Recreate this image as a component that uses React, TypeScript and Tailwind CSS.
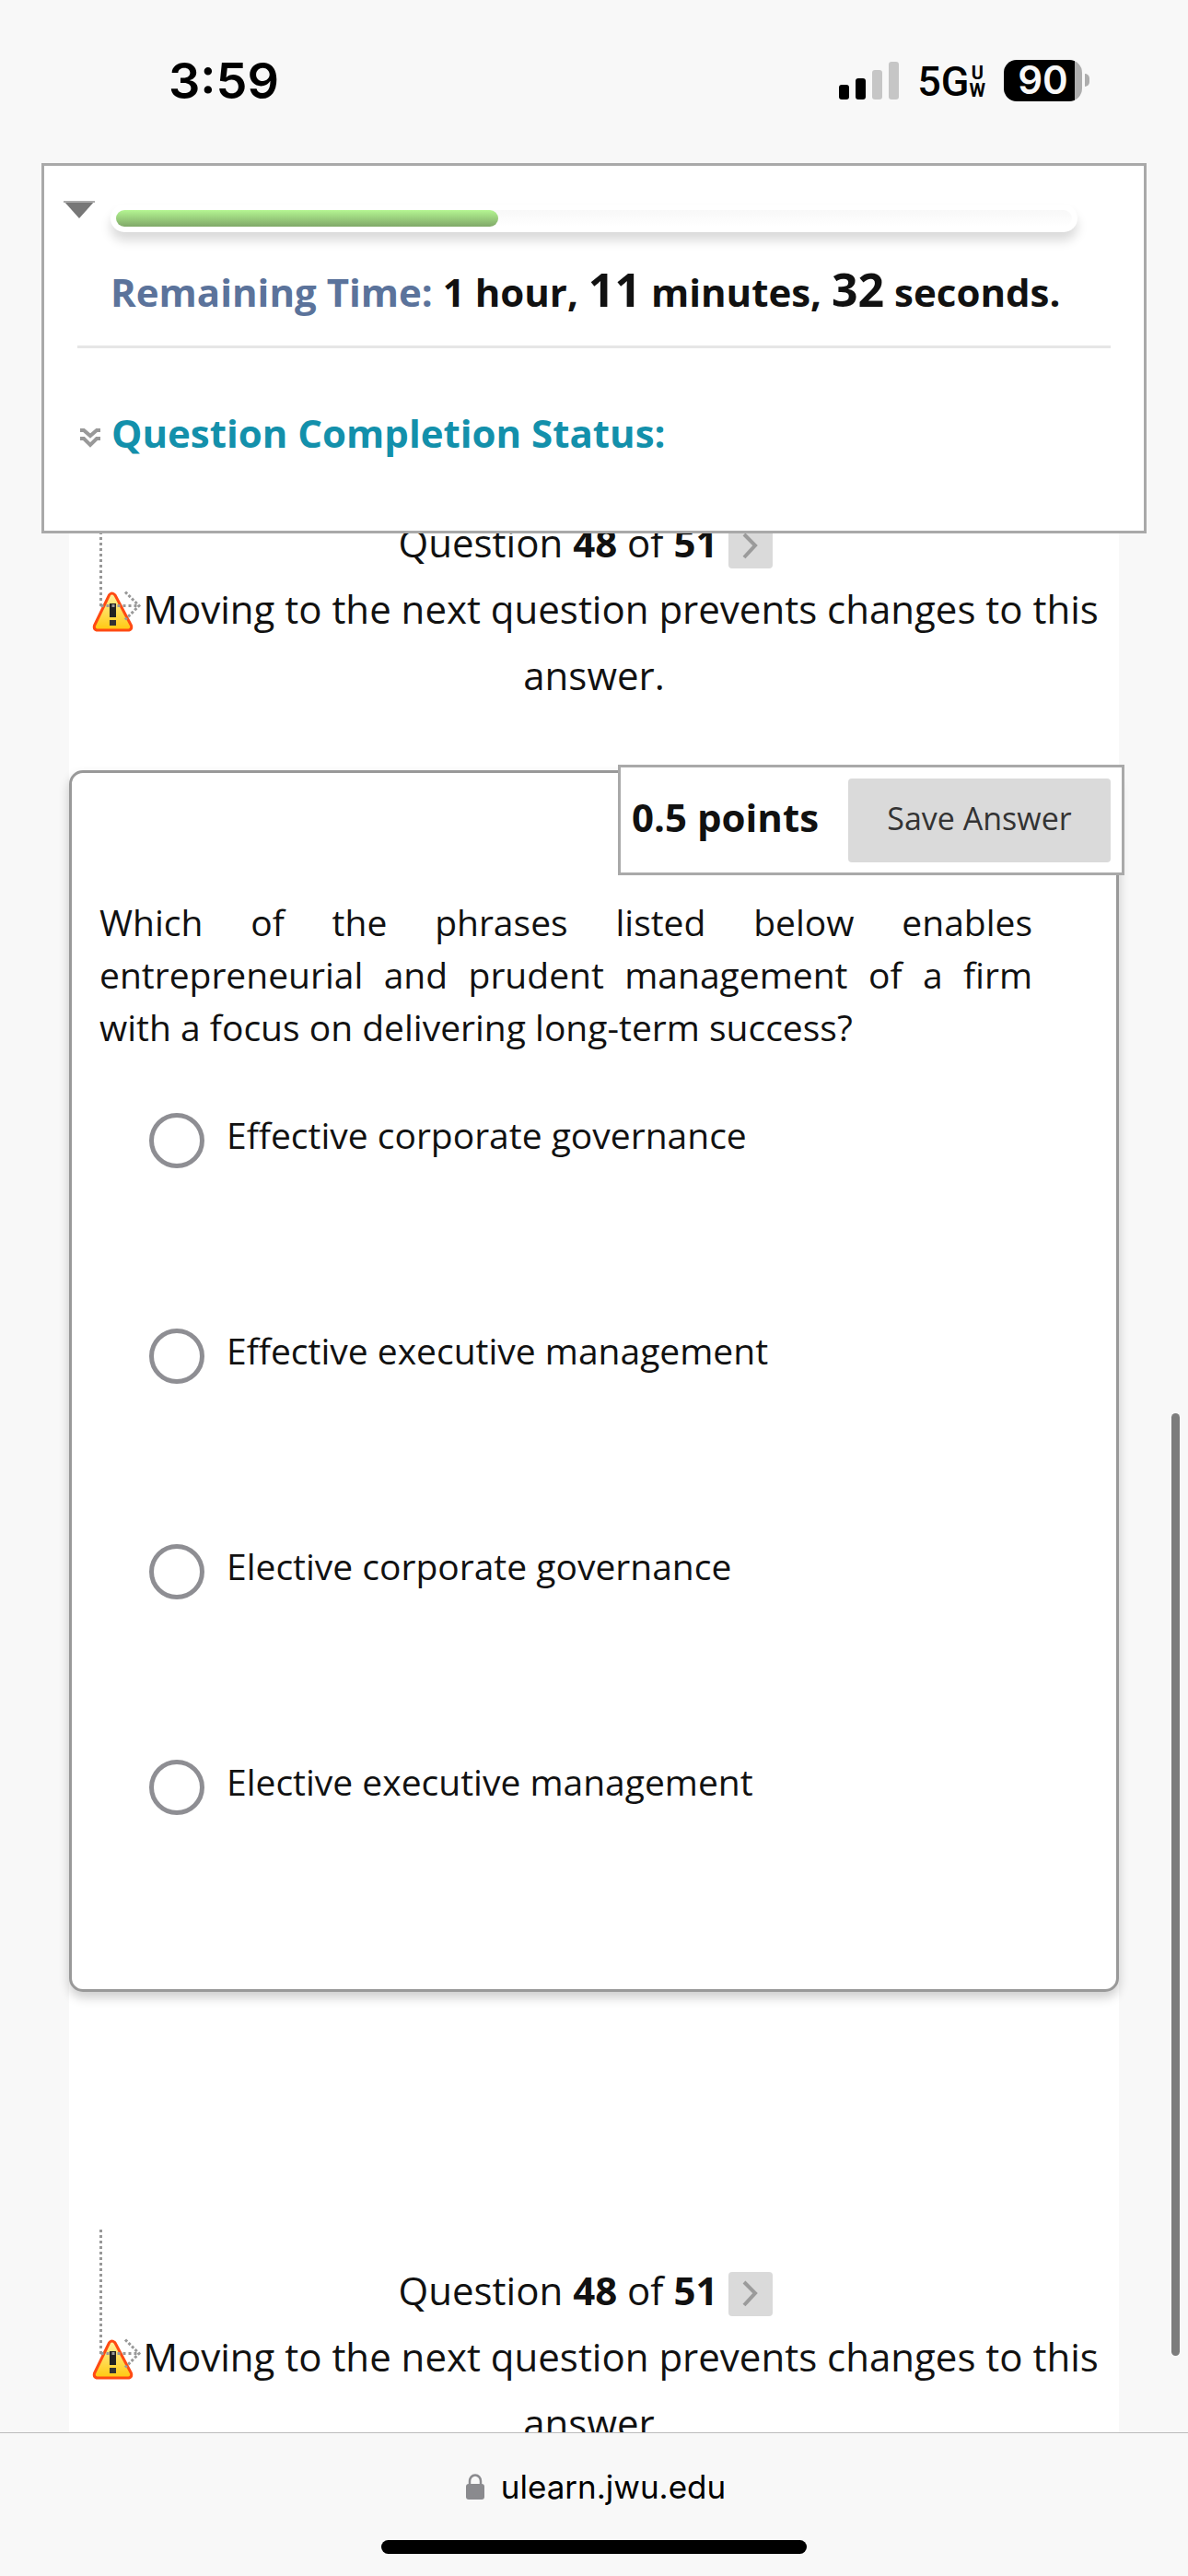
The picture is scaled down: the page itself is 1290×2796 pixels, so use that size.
import { useState } from 'react'

const OPTIONS = [
  'Effective corporate governance',
  'Effective executive management',
  'Elective corporate governance',
  'Elective executive management',
]

const TOTAL_WIDTH = 1038
const ELAPSED_WIDTH = 415

function StatusBar() {
  return (
    <header className="flex h-[177px] shrink-0 items-start justify-between pl-[183px] pr-[107px] pt-[57px] font-['Inter',sans-serif] text-black">
      <span className="text-[54px] font-semibold leading-[62px]">3:59</span>
      <div className="flex h-[60px] items-center">
        {/* Signal strength */}
        <svg width="65" height="41" viewBox="0 0 65 41" aria-hidden="true">
          <rect x="0" y="25" width="11" height="16" rx="3" fill="#000" />
          <rect x="18" y="18" width="11" height="23" rx="3" fill="#000" />
          <rect x="36" y="9" width="11" height="32" rx="3" fill="#c6c6c6" />
          <rect x="54" y="0" width="11" height="41" rx="3" fill="#c6c6c6" />
        </svg>
        <div className="ml-5 flex items-center pt-1 font-['Roboto',sans-serif]">
          <span className="text-[45px] font-medium leading-[60px]">5G</span>
          <span className="flex flex-col items-center text-[20px] font-bold leading-[19px]">
            <span>U</span>
            <span>W</span>
          </span>
        </div>
        {/* Battery */}
        <div className="ml-5 flex items-center">
          <div className="flex h-[45px] w-[85px] items-center justify-center rounded-[14px] bg-linear-to-r from-black from-[91%] to-[#adadad] to-[91%] text-[42px] font-semibold leading-[52px] text-[#f8f8f8]">
            90
          </div>
          <div className="ml-[3px] h-[14px] w-[5px] rounded-r-full bg-[#adadad]" />
        </div>
      </div>
    </header>
  )
}

function TimerPanel() {
  return (
    <section className="relative z-10 mx-[45px] h-[402px] shrink-0 border-[3px] border-[#a9a9a9] bg-white">
      <div className="flex items-start pl-[21px] pr-[72px] pt-[38px]">
        <button aria-label="Collapse timer" className="w-[51px]">
          <svg width="34" height="19" viewBox="0 0 34 19">
            <path d="M0 0h34L17 19z" fill="#777" />
            <path d="M0 0h34v2H0z" fill="#aaa" />
          </svg>
        </button>
        <div className="mt-1 h-[30px] flex-1 rounded-full bg-white p-[6px] shadow-[0_9px_12px_rgba(0,0,0,0.15)]">
          <div className="h-[18px] rounded-full bg-linear-to-b from-[#f8f8f8] to-white">
            <div
              className="h-full rounded-full bg-linear-to-b from-[#b4f692] to-[#80a868]"
              style={{ width: `${(ELAPSED_WIDTH / TOTAL_WIDTH) * 100}%` }}
            />
          </div>
        </div>
      </div>
      <p className="mt-8 h-[63px] whitespace-nowrap pl-[72px] text-[42px] font-bold leading-[60px]">
        <span className="text-[#5b739b]">Remaining Time:</span> 1 hour, <span className="text-[50px]">11</span> minutes,{' '}
        <span className="text-[50px]">32</span> seconds.
      </p>
      <hr className="mx-9 mt-7 border-t-[3px] border-[#e6e6e6]" />
      <button className="mt-[62px] flex items-center pl-[39px] text-[42px] font-bold leading-[60px] text-[#1390ab]">
        <svg className="mr-3 mt-3" width="22" height="22" viewBox="0 0 22 22" fill="none" stroke="#999" strokeWidth="4">
          <path d="M0 2h4l7 6 7-6h4M0 11h4l7 7 7-7h4" />
        </svg>
        Question Completion Status:
      </button>
    </section>
  )
}

function WarningIcon() {
  return (
    <svg className="mr-1 inline-block align-[-9px]" width="54" height="44" viewBox="0 0 54 44" aria-hidden="true">
      <defs>
        <linearGradient id="warn" x1="0" y1="0" x2="0" y2="1">
          <stop offset="0" stopColor="#fff3a0" />
          <stop offset="1" stopColor="#ffc80f" />
        </linearGradient>
      </defs>
      <path
        d="M23 2.500q2.500-1.500 5 1.500l17.500 33q1 4-2.500 5h-35q-3.500-1-2.500-5l16-33q.5-1 1.500-1.500z"
        fill="url(#warn)"
        stroke="#ff4a12"
        strokeWidth="3"
        strokeLinejoin="round"
      />
      <path d="M22 13h7v15h-7z" fill="#222" />
      <path d="M22 31h7v6h-7z" fill="#333" />
    </svg>
  )
}

function QuestionNav() {
  return (
    <nav className="relative pt-[30px] text-center text-[42px] leading-[72px]">
      {/* Dotted arrow pointing to the warning */}
      <svg
        className="absolute left-8 top-0"
        width="48"
        height="154"
        viewBox="0 0 48 154"
        fill="none"
        stroke="#999"
        strokeWidth="3"
        aria-hidden="true"
      >
        <path d="M2.500 0V136" strokeDasharray="3 3" />
        <path d="M2.500 134.500H44" strokeDasharray="3 3" />
        <path d="M29 119.500l15 15-15 15" strokeDasharray="3 2" />
      </svg>
      <div className="flex h-[72px] items-end justify-center pr-[18px]">
        <span>
          Question <b>48</b> of <b>51</b>
        </span>
        <button
          aria-label="Next question"
          className="mb-2 ml-3 flex size-12 items-center justify-center rounded bg-[#dadada]"
        >
          <svg width="18" height="30" viewBox="0 0 18 30" fill="none" stroke="#9b9b9b" strokeWidth="4">
            <path d="M2 2l12 12L2 27" />
          </svg>
        </button>
      </div>
      <p className="px-5">
        <WarningIcon />
        Moving to the next question prevents changes to this answer.
      </p>
    </nav>
  )
}

function QuestionCard() {
  const [answer, setAnswer] = useState('')

  return (
    <section className="relative mt-[67px] rounded-[15px] border-[3px] border-[#999] bg-white pb-5 pt-[133px] text-[39px] leading-[57px] shadow-[0_6px_12px_rgba(0,0,0,0.2)]">
      <div className="absolute -right-[9px] -top-[9px] flex h-[120px] w-[550px] items-start justify-between border-[3px] border-[#a9a9a9] bg-white px-3 pt-3">
        <span className="text-[42px] font-bold leading-[84px]">0.5 points</span>
        <button className="h-[91px] w-[285px] rounded bg-[#dadada] pb-1 text-[34px] text-[#333]">Save Answer</button>
      </div>
      <p className="pl-[30px] pr-[91px] text-justify">
        Which of the phrases listed below enables entrepreneurial and prudent management of a firm with a focus on
        delivering long-term success?
      </p>
      <ul className="mt-[60px] pl-[84px]">
        {OPTIONS.map((option) => (
          <li key={option} className="h-[234px]">
            <label className="flex items-start gap-6">
              <input
                type="radio"
                name="answer"
                checked={answer === option}
                onChange={() => setAnswer(option)}
                className="mt-[5px] size-[60px] shrink-0 appearance-none rounded-full border-[5px] border-[#8e8e93] bg-white checked:border-[18px] checked:border-blue-500"
              />
              {option}
            </label>
          </li>
        ))}
      </ul>
    </section>
  )
}

function AddressBar() {
  return (
    <footer className="relative z-10 flex h-[156px] shrink-0 flex-col items-center border-t border-[#bcbcbc] bg-[#f8f8f8] font-['Inter',sans-serif]">
      <a href="https://ulearn.jwu.edu" className="mt-8 flex items-center pl-1 text-[35px] leading-[52px] text-black">
        <svg className="mr-[18px]" width="20" height="28" viewBox="0 0 20 28" aria-hidden="true">
          <path d="M4 13V8a6 6.500 0 0 1 12 0v5" fill="none" stroke="#8a8a8e" strokeWidth="2.500" />
          <rect x="0" y="11" width="20" height="17" rx="3" fill="#8a8a8e" />
        </svg>
        ulearn.jwu.edu
      </a>
      <div className="mt-8 h-[15px] w-[462px] rounded-full bg-black" />
    </footer>
  )
}

export default function App() {
  return (
    <div className="relative flex h-screen flex-col overflow-hidden bg-[#f8f8f8] font-['Open_Sans',sans-serif] text-[#111]">
      <StatusBar />
      <TimerPanel />
      {/* Page content, scrolled under the timer panel */}
      <main className="-mt-14 min-h-0 flex-1 overflow-hidden px-[75px]">
        <div className="bg-white">
          <QuestionNav />
          <QuestionCard />
          <div className="pt-[258px]">
            <QuestionNav />
          </div>
        </div>
      </main>
      {/* Scroll thumb */}
      <div className="absolute right-[9px] top-[1534px] h-[1023px] w-[9px] rounded-full bg-[#7d7d7d]" />
      <AddressBar />
    </div>
  )
}
